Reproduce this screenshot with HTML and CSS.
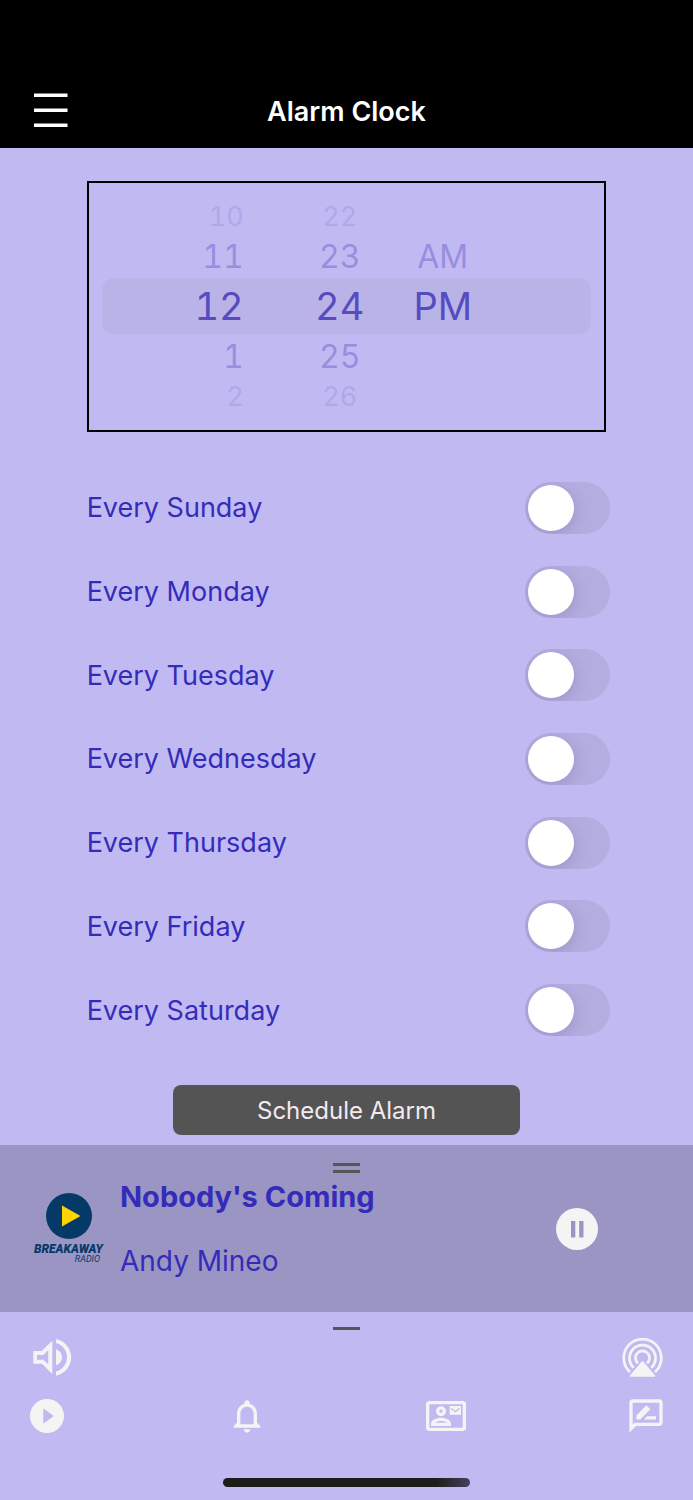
FILE: index.html
```html
<!DOCTYPE html>
<html lang="en">
<head>
<meta charset="utf-8">
<meta name="viewport" content="width=device-width, initial-scale=1">
<title>Alarm Clock</title>
<link rel="stylesheet" href="styles.css">
</head>
<body>
<header class="topbar">
  <button class="icon-button menu" type="button" aria-label="Menu">
    <svg width="36" height="36" viewBox="0 0 36 36"><path d="M2 2.300h33.500M2 17.300h33.500M2 32.300h33.500" stroke="#fff" stroke-width="3.400"/></svg>
  </button>
  <h1 class="topbar-title">Alarm Clock</h1>
</header>

<main class="alarm">
  <section class="picker" aria-label="Alarm time">
    <div class="picker-row far"><span class="hour">10</span><span>22</span><span></span></div>
    <div class="picker-row near"><span class="hour">11</span><span>23</span><span>AM</span></div>
    <div class="picker-row selected"><span class="hour">12</span><span>24</span><span>PM</span></div>
    <div class="picker-row near"><span class="hour">1</span><span>25</span><span></span></div>
    <div class="picker-row far"><span class="hour">2</span><span>26</span><span></span></div>
  </section>

  <div class="days">
    <label class="day">Every Sunday<input class="switch" type="checkbox" role="switch"></label>
    <label class="day">Every Monday<input class="switch" type="checkbox" role="switch"></label>
    <label class="day">Every Tuesday<input class="switch" type="checkbox" role="switch"></label>
    <label class="day">Every Wednesday<input class="switch" type="checkbox" role="switch"></label>
    <label class="day">Every Thursday<input class="switch" type="checkbox" role="switch"></label>
    <label class="day">Every Friday<input class="switch" type="checkbox" role="switch"></label>
    <label class="day">Every Saturday<input class="switch" type="checkbox" role="switch"></label>
  </div>
</main>

<div class="actions">
  <button class="schedule" type="button">Schedule Alarm</button>
</div>

<section class="player" aria-label="Now playing">
  <div class="grip grip-double"></div>
  <div class="player-body">
    <svg class="logo" width="70" height="72" viewBox="0 0 70 72" role="img" aria-label="Breakaway Radio">
      <circle cx="35" cy="23" r="23" fill="#053a68"/>
      <path d="M28 12.500v21l18.500-10.500z" fill="#ffd400"/>
      <text class="logo-name" x="0" y="60">BREAKAWAY</text>
      <text class="logo-sub" x="66" y="69" text-anchor="end">RADIO</text>
    </svg>
    <div class="track">
      <div class="track-title">Nobody's Coming</div>
      <div class="track-artist">Andy Mineo</div>
    </div>
    <button class="icon-button" type="button" aria-label="Pause">
      <svg width="42" height="42" viewBox="0 0 42 42"><circle cx="21" cy="21" r="21" fill="#f5f4f5"/><path d="M15 13h4.300v16.500H15zM23.200 13h4.300v16.500h-4.300z" fill="#9b95c4"/></svg>
    </button>
  </div>
</section>

<footer class="bottom">
  <div class="grip"></div>
  <div class="icon-row">
    <button class="icon-button" type="button" aria-label="Volume">
      <svg width="46" height="40" viewBox="-5 0 46 40" fill="#f5f4f5">
        <path fill-rule="evenodd" d="M1.300 13H9.700L20.300 2.700V36L10 25.700H1.300zM5 17v4.700h6.300l5 4.600V12l-5 5z"/>
        <path d="M24 11.300c3.500 1.200 6 4.400 6 8s-2.500 6.800-6 8z"/>
        <path d="M24 1c8.700 1.800 15.200 9.300 15.200 18.350S32.700 35.900 24 37.700v-4.100c6.500-1.700 11-7.400 11-14.250S30.500 6.800 24 5.100z"/>
      </svg>
    </button>
    <button class="icon-button" type="button" aria-label="AirPlay">
      <svg width="48" height="40" viewBox="-24.500 -20 48 40">
        <g fill="none" stroke="#f5f4f5" stroke-width="2.700" stroke-linecap="round">
          <path d="M-13.300 13.200A18.800 18.800 0 1 1 13.300 13.200"/>
          <path d="M-9.500 9A13 13 0 1 1 9.500 9"/>
          <path d="M-5.300 4.500A7 7 0 1 1 5.300 4.500"/>
        </g>
        <path d="M0 3.800L12 18H-12z" fill="#f5f4f5" stroke="#f5f4f5" stroke-width="1.500" stroke-linejoin="round"/>
      </svg>
    </button>
  </div>
  <nav class="icon-row nav">
    <a class="nav-link" href="#play" aria-label="Play">
      <svg width="40" height="40" viewBox="0 0 40 40"><path fill="#f5f4f5" fill-rule="evenodd" d="M20 3a17 17 0 1 0 0 34a17 17 0 1 0 0-34zM16.300 12.300v15.400L26.700 20z"/></svg>
    </a>
    <a class="nav-link" href="#alarm" aria-label="Alarm">
      <svg width="40" height="40" viewBox="0 0 24 24"><path fill="#f5f4f5" d="M12 22c1.100 0 2-.9 2-2h-4c0 1.100.9 2 2 2zm6-6v-5c0-3.070-1.630-5.640-4.500-6.320V4c0-.83-.67-1.500-1.500-1.500s-1.500.67-1.500 1.500v.68C7.640 5.360 6 7.920 6 11v5l-2 2v1h16v-1l-2-2zm-2 1H8v-6c0-2.480 1.510-4.500 4-4.500s4 2.020 4 4.500v6z"/></svg>
    </a>
    <a class="nav-link" href="#contact" aria-label="Contact">
      <svg width="40" height="40" viewBox="0 0 24 24" fill="#f5f4f5" fill-rule="evenodd">
        <path d="M22 3H2C.9 3 0 3.900 0 5v14c0 1.100.9 2 2 2h20c1.100 0 2-.9 2-2V5c0-1.100-.9-2-2-2zm0 16H2V5h20z"/>
        <path d="M14.200 6H21v5.200h-6.800zM15 7v1l2.600 1.900L20.200 8V7l-2.600 1.900z"/>
        <path d="M9 6.100a3 3 0 1 0 0 6a3 3 0 1 0 0-6zm0 2a1 1 0 1 1 0 2a1 1 0 1 1 0-2z"/>
        <path d="M3 18v-1.400C3 14.200 6.700 13 9 13s6 1.200 6 3.600V18zm2.500-2h7c-.7-.6-2.200-1-3.500-1s-2.800.4-3.500 1z"/>
      </svg>
    </a>
    <a class="nav-link" href="#review" aria-label="Review">
      <svg width="40" height="40" viewBox="0 0 24 24" fill="#f5f4f5">
        <path d="M20 2H4c-1.100 0-2 .9-2 2v18l4-4h14c1.100 0 2-.9 2-2V4c0-1.100-.9-2-2-2zm0 14H5.170L4 17.170V4h16z"/>
        <path d="M6.200 14.100v-2.400l6-6.100 2.400 2.300-6 6.200zM10.700 14.100l2-2H18v2z"/>
      </svg>
    </a>
  </nav>
  <div class="home-indicator"></div>
</footer>
</body>
</html>
```

FILE: styles.css
```css
* {
  box-sizing: border-box;
}

body {
  margin: 0;
  background: #c1baf2;
  color: #342cb9;
  font-family: Inter, "Liberation Sans", sans-serif;
  font-size: 27px;
}

svg {
  display: block;
}

.icon-button {
  padding: 0;
  border: 0;
  background: none;
}

.topbar {
  display: grid;
  grid-template-columns: 1fr auto 1fr;
  align-items: center;
  padding: 74px 32px 0;
  height: 148px;
  background: #000;
  color: #fff;
}

.menu {
  justify-self: start;
}

.topbar-title {
  margin: 0;
  font-size: 27px;
  font-weight: 600;
}

.alarm {
  padding: 33px 12% 0 12.5%;
}

.picker {
  margin-right: 4px;
  padding: 15px 13px 16px;
  border: 2px solid #000;
  font-variant-numeric: tabular-nums;
}

.picker-row {
  display: grid;
  grid-template-columns: 190fr 96fr 110fr 93fr;
  align-items: center;
  text-align: center;
}

.hour {
  padding-right: 48px;
  text-align: right;
}

.far {
  height: 36px;
  font-size: 27px;
  color: #b0a8ea;
}

.near {
  height: 44px;
  font-size: 32px;
  color: #978ee0;
}

.selected {
  height: 56px;
  border-radius: 12px;
  background: #bab3e7;
  font-size: 38px;
  color: #544cc0;
}

.days {
  display: grid;
  grid-auto-rows: 1fr;
  min-height: 586px;
  margin: 34px 0 33px;
}

.day {
  display: flex;
  align-items: center;
  justify-content: space-between;
}

.switch {
  appearance: none;
  display: flex;
  align-items: center;
  width: 85px;
  height: 52px;
  margin: 0;
  padding: 3px;
  border-radius: 26px;
  background: #b4addf;
  overflow: hidden;
}

.switch::before {
  content: "";
  width: 46px;
  height: 46px;
  border-radius: 50%;
  background: #fff;
  box-shadow: 0 4px 16px rgba(60, 50, 110, 0.2);
}

.switch:checked {
  justify-content: flex-end;
  background: #342cb9;
}

.actions {
  display: flex;
  justify-content: center;
  padding-bottom: 10px;
}

.schedule {
  width: 50%;
  height: 50px;
  border: 0;
  border-radius: 8px;
  background: #545454;
  color: #f3eaf0;
  font-family: inherit;
  font-size: 24px;
}

.grip {
  width: 27px;
  height: 3px;
  margin: 0 auto;
  background: #555;
}

.grip-double {
  height: 10px;
  border: solid #555;
  border-width: 3px 0;
  background: none;
}

.player {
  padding: 18px 0 27px;
  background: #9b95c4;
}

.player-body {
  display: flex;
  align-items: center;
  gap: 16px;
  padding: 0 95px 0 34px;
}

.logo {
  overflow: visible;
}

.logo-name {
  font: italic 900 12px Roboto, sans-serif;
  fill: #053a68;
}

.logo-sub {
  font: italic 400 9px Roboto, sans-serif;
  fill: #053a68;
}

.track {
  display: grid;
  flex: 1;
  gap: 16px;
  line-height: 48px;
}

.track-title {
  font-size: 29px;
  font-weight: 700;
}

.track-artist {
  font-size: 28px;
}

.bottom {
  padding: 15px 27px 13px;
}

.icon-row {
  display: flex;
  justify-content: space-between;
  margin-top: 8px;
}

.nav {
  margin-top: 18px;
}

.home-indicator {
  width: 247px;
  height: 9px;
  margin: 42px auto 0;
  border-radius: 5px;
  background: linear-gradient(90deg, #1c1c1c 86%, #45425a);
}
```
